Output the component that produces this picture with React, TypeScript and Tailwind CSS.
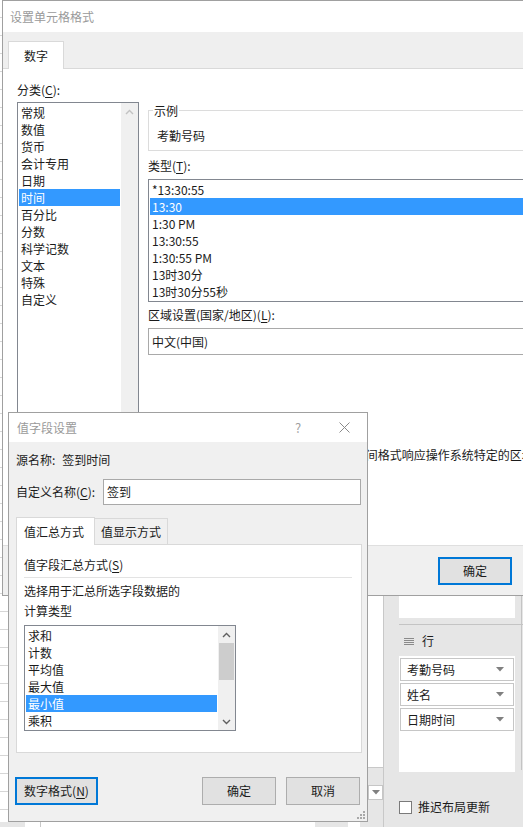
import React from 'react'

const categories = ['常规', '数值', '货币', '会计专用', '日期', '时间', '百分比', '分数', '科学记数', '文本', '特殊', '自定义']
const timeTypes = ['*13:30:55', '13:30', '1:30 PM', '13:30:55', '1:30:55 PM', '13时30分', '13时30分55秒']
const calcTypes = ['求和', '计数', '平均值', '最大值', '最小值', '乘积']
const rowFields = ['考勤号码', '姓名', '日期时间']

function Chevron({ up, className }: { up?: boolean; className?: string }) {
  return (
    <svg width="9" height="6" viewBox="0 0 9 6" className={className}>
      <path
        d={up ? 'M1 5 L4.5 1.5 L8 5' : 'M1 1 L4.5 4.5 L8 1'}
        fill="none"
        stroke="currentColor"
        strokeWidth="1.4"
      />
    </svg>
  )
}

function DropTriangle() {
  return (
    <svg width="8" height="5" viewBox="0 0 8 5" className="text-[#808080]">
      <path d="M0 0 H8 L4 4.5 Z" fill="currentColor" />
    </svg>
  )
}

function Key({ k }: { k: string }) {
  return <span className="underline underline-offset-2">{k}</span>
}

function ExcelBackdrop() {
  return (
    <>
      {/* row grid peeking out at the left */}
      <div className="absolute left-0 top-0 flex h-full w-[8px] flex-col bg-white">
        {Array.from({ length: 47 }).map((_, i) => (
          <div key={i} className="h-[18px] shrink-0 border-b border-[#d6d6d6]" />
        ))}
      </div>

      {/* sliver of the sheet between the dialog and the field pane */}
      <div className="absolute left-[368px] top-[596px] flex h-[231px] w-[15px] flex-col">
        <div className="h-[171px] bg-white" />
        <div className="h-[18px] border-t border-[#c8c8c8] bg-[#e6e6e6]" />
        <div className="flex h-[15px] items-center justify-center border border-[#c6c6c6] bg-white">
          <DropTriangle />
        </div>
        <div className="flex-1 bg-[#e6e6e6]" />
      </div>

      {/* status strip under the value field dialog */}
      <div className="absolute left-0 top-[822px] flex h-[5px] w-[368px] bg-[#e6e6e6]">
        <div className="ml-[25px] w-[15px] bg-white" />
        <div className="w-[275px] border-l border-[#c8c8c8] bg-white" />
        <div className="ml-[33px] w-[12px] bg-white" />
      </div>
    </>
  )
}

function FieldPane() {
  return (
    <div className="absolute left-[383px] top-[596px] flex h-[231px] w-[140px] flex-col border-l border-[#c8c8c8] bg-[#e6e6e6] pl-[15px]">
      <div className="absolute right-px top-0 h-[174px] w-px bg-[#c4c4c4]" />
      <div className="h-[22px] w-[116px] bg-white" />
      <div className="mt-[6px] h-px w-[124px] bg-[#c4c4c4]" />
      <div className="mt-[8px] flex h-[16px] items-center">
        <svg width="10" height="7" viewBox="0 0 10 7" className="ml-[5px] text-[#8a8a8a]">
          <rect x="0" y="0" width="10" height="1" fill="currentColor" />
          <rect x="0" y="2" width="10" height="1" fill="currentColor" />
          <rect x="0" y="4" width="10" height="1" fill="currentColor" />
          <rect x="0" y="6" width="10" height="1" fill="currentColor" />
        </svg>
        <span className="ml-[8px]">行</span>
      </div>
      <div className="mt-[7px] flex h-[116px] w-[116px] flex-col gap-[2px] bg-white px-px pt-[2px]">
        {rowFields.map((f) => (
          <div
            key={f}
            className="flex h-[23px] items-center justify-between border border-[#c6c6c6] bg-white pl-[6px] pr-[9px]"
          >
            <span>{f}</span>
            <DropTriangle />
          </div>
        ))}
      </div>
      <div className="mt-[27px] flex items-center">
        <div className="h-[13px] w-[13px] border border-[#7a7a7a] bg-white" />
        <span className="ml-[6px]">推迟布局更新</span>
      </div>
    </div>
  )
}

function FormatCellsDialog() {
  return (
    <div className="absolute left-[2px] top-0 flex h-[596px] w-[620px] flex-col border border-[#a0a0a0] bg-white">
      <div className="flex h-[31px] items-center pl-[7px] text-[#9a9a9a]">设置单元格格式</div>

      <div className="flex h-[37px] items-end border-b border-[#d9d9d9] bg-[#efefef] pl-[5px]">
        <div className="-mb-px flex h-[28px] w-[56px] items-center justify-center border border-b-0 border-[#d9d9d9] bg-white">
          数字
        </div>
      </div>

      <div className="flex flex-1 items-start pl-[14px] pt-[13px]">
        {/* category list */}
        <div className="flex w-[122px] shrink-0 flex-col">
          <div>
            分类(<Key k="C" />):
          </div>
          <div className="mt-[4px] flex h-[420px] border border-[#828790]">
            <div className="flex flex-1 flex-col px-px pt-px">
              {categories.map((c, i) => (
                <div
                  key={c}
                  className={
                    i === 5
                      ? 'h-[17px] whitespace-nowrap bg-[#3399ff] pl-[2px] leading-[17px] text-white'
                      : 'h-[17px] whitespace-nowrap pl-[2px] leading-[17px]'
                  }
                >
                  {c}
                </div>
              ))}
            </div>
            <div className="flex w-[17px] shrink-0 flex-col items-center bg-[#f0f0f0] pt-[6px] text-[#c2c2c2]">
              <Chevron up />
            </div>
          </div>
        </div>

        {/* sample, type, locale */}
        <div className="ml-[9px] flex min-w-0 flex-1 flex-col pr-[10px] pt-[28px]">
          <div className="relative h-[41px] border border-[#dcdcdc] pl-[8px] pt-[17px]">
            <span className="absolute -top-[8px] left-[4px] bg-white px-px">示例</span>
            考勤号码
          </div>

          <div className="mt-[7px]">
            类型(<Key k="T" />):
          </div>
          <div className="mt-[5px] flex h-[123px] flex-col border border-[#828790] px-px pt-px">
            {timeTypes.map((t, i) => (
              <div
                key={t + i}
                className={
                  i === 1
                    ? 'h-[17px] bg-[#3399ff] pl-[2px] leading-[17px] text-white'
                    : 'h-[17px] pl-[2px] leading-[17px]'
                }
              >
                {t}
              </div>
            ))}
          </div>

          <div className="mt-[5px]">
            区域设置(国家/地区)(<Key k="L" />):
          </div>
          <div className="mt-[5px] flex h-[27px] items-center border border-[#a9a9a9] pl-[3px]">中文(中国)</div>

          <div className="mt-[92px] whitespace-nowrap">
            序列号显示为时间值。以星号(*)开头的时间格式响应操作系统特定的区域日期和时间
          </div>
        </div>
      </div>

      <div className="flex h-[50px] justify-end gap-[26px] border-t border-[#dfdfdf] bg-[#f0f0f0] pr-[9px] pt-[11px]">
        <button className="h-[28px] w-[74px] border-2 border-[#0078d7] bg-[#e1e1e1]">确定</button>
        <button className="h-[28px] w-[74px] border border-[#adadad] bg-[#e1e1e1]">取消</button>
      </div>
    </div>
  )
}

function ValueFieldDialog() {
  return (
    <div className="absolute left-[8px] top-[412px] flex h-[410px] w-[360px] flex-col border border-[#a0a0a0] bg-[#f0f0f0]">
      <div className="flex h-[29px] items-center bg-white pl-[8px] text-[#9a9a9a]">
        <span>值字段设置</span>
        <div className="ml-auto flex h-full">
          <div className="flex w-[46px] items-center justify-center text-[13px] text-[#a0a0a0]">?</div>
          <div className="flex w-[46px] items-center justify-center">
            <svg width="11" height="11" viewBox="0 0 11 11" className="text-[#8a8a8a]">
              <path d="M0.5 0.5 L10.5 10.5 M10.5 0.5 L0.5 10.5" stroke="currentColor" strokeWidth="1" />
            </svg>
          </div>
        </div>
      </div>

      <div className="relative flex flex-1 flex-col pl-[7px] pr-[5px] pt-[10px]">
        <div className="flex gap-[7px]">
          <span>源名称:</span>
          <span>签到时间</span>
        </div>

        <div className="mt-[11px] flex items-center">
          <span className="w-[87px]">
            自定义名称(<Key k="C" />):
          </span>
          <div className="flex h-[26px] w-[258px] items-center border border-[#a9a9a9] bg-white pl-[3px]">签到</div>
        </div>

        <div className="relative z-10 -mb-px mt-[12px] flex h-[28px] items-end">
          <div className="flex h-[28px] w-[79px] items-center border border-b-0 border-[#d9d9d9] bg-white pl-[7px]">
            值汇总方式
          </div>
          <div className="flex h-[27px] w-[73px] items-center border border-l-0 border-[#d9d9d9] bg-[#f0f0f0] pl-[6px]">
            值显示方式
          </div>
        </div>

        <div className="flex h-[209px] w-[346px] flex-col border border-[#d9d9d9] bg-white pl-[7px] pr-[9px] pt-[12px]">
          <div>
            值字段汇总方式(<Key k="S" />)
          </div>
          <div className="mt-[4px] h-px bg-[#e3e3e3]" />
          <div className="mt-[5px]">选择用于汇总所选字段数据的</div>
          <div className="mt-[4px]">计算类型</div>
          <div className="mt-[6px] flex h-[106px] w-[212px] border border-[#828790]">
            <div className="flex flex-1 flex-col px-px pt-px">
              {calcTypes.map((c, i) => (
                <div
                  key={c}
                  className={
                    i === 4
                      ? 'h-[17px] bg-[#3399ff] pl-[2px] leading-[17px] text-white'
                      : 'h-[17px] pl-[2px] leading-[17px]'
                  }
                >
                  {c}
                </div>
              ))}
            </div>
            <div className="flex w-[17px] flex-col items-center bg-[#f0f0f0] text-[#606060]">
              <div className="flex h-[17px] items-center">
                <Chevron up />
              </div>
              <div className="h-[37px] w-[15px] bg-[#cdcdcd]" />
              <div className="flex flex-1 items-end pb-[5px]">
                <Chevron />
              </div>
            </div>
          </div>
        </div>

        <div className="mt-[24px] flex items-center">
          <button className="-ml-px h-[28px] w-[83px] border-2 border-[#0078d7] bg-[#e1e1e1]">
            数字格式(<Key k="N" />)
          </button>
          <button className="ml-auto h-[28px] w-[74px] border border-[#adadad] bg-[#e1e1e1]">确定</button>
          <button className="ml-[10px] mr-[2px] h-[28px] w-[74px] border border-[#adadad] bg-[#e1e1e1]">取消</button>
        </div>

        <svg width="10" height="10" viewBox="0 0 10 10" className="absolute bottom-[2px] right-[2px] text-[#a8a8a8]">
          <rect x="8" y="2" width="2" height="2" fill="currentColor" />
          <rect x="5" y="5" width="2" height="2" fill="currentColor" />
          <rect x="8" y="5" width="2" height="2" fill="currentColor" />
          <rect x="2" y="8" width="2" height="2" fill="currentColor" />
          <rect x="5" y="8" width="2" height="2" fill="currentColor" />
          <rect x="8" y="8" width="2" height="2" fill="currentColor" />
        </svg>
      </div>
    </div>
  )
}

export default function App() {
  return (
    <div className="relative h-[827px] w-[523px] overflow-hidden bg-white font-['Noto_Sans_CJK_SC',sans-serif] text-[12px] leading-[16px] text-[#1b1b1b]">
      <ExcelBackdrop />
      <FieldPane />
      <FormatCellsDialog />
      <ValueFieldDialog />
    </div>
  )
}
